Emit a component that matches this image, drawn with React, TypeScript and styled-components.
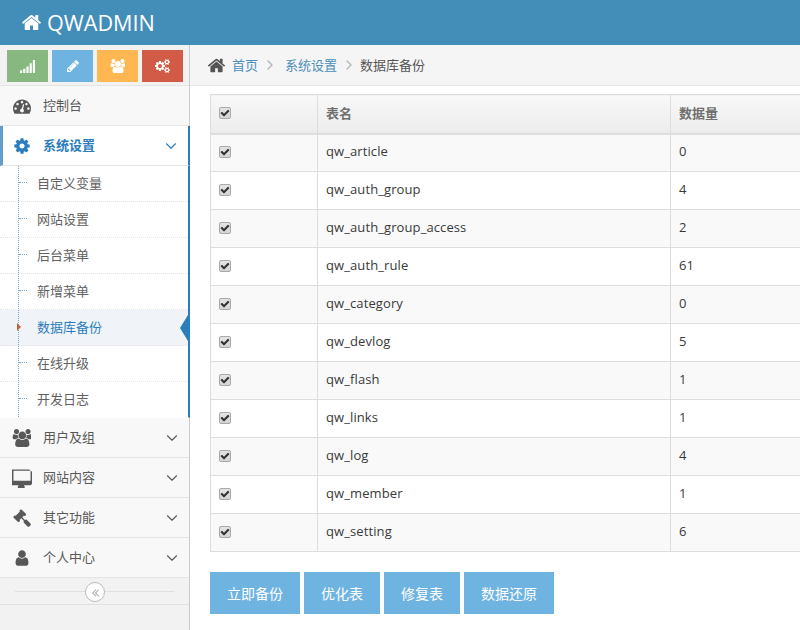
import React from "react";
import styled, { createGlobalStyle } from "styled-components";
import { FiChevronDown, FiChevronRight } from "react-icons/fi";

const FONT = `"Open Sans", "Noto Sans CJK SC", sans-serif`;

// Font Awesome 4 shapes, the react-icons set only has the newer ones
const HOME =
  "M1472 992v480q0 26-19 45t-45 19h-384v-384h-256v384h-384q-26 0-45-19t-19-45v-480q0-1 .5-3t.5-3l575-474 575 474q1 2 1 6zm223-69l-62 74q-8 9-21 11h-3q-13 0-21-7l-692-577-692 577q-12 8-24 7-13-2-21-11l-62-74q-8-10-7-23.5t11-21.5l719-599q32-26 76-26t76 26l244 204v-195q0-14 9-23t23-9h192q14 0 23 9t9 23v408l219 182q10 8 11 21.5t-7 23.5z";
const USERS =
  "M657 896q-162 5-265 128h-134q-82 0-138-40.5t-56-118.5q0-353 124-353 6 0 43.5 21t97.5 42.5 119 21.5q67 0 133-23-5 37-5 66 0 139 81 256zm1071 637q0 120-73 189.5t-194 69.5h-874q-121 0-194-69.5t-73-189.5q0-53 3.5-103.5t14-109 26.5-108.5 43-97.5 62-81 85.5-53.5 111.5-20q10 0 43 21.5t73 48 107 48 135 21.5 135-21.5 107-48 73-48 43-21.5q61 0 111.5 20t85.5 53.5 62 81 43 97.5 26.5 108.5 14 109 3.5 103.5zm-1024-1277q0 106-75 181t-181 75-181-75-75-181 75-181 181-75 181 75 75 181zm704 384q0 159-112.5 271.5t-271.5 112.5-271.5-112.5-112.5-271.5 112.5-271.5 271.5-112.5 271.5 112.5 112.5 271.5zm576 225q0 78-56 118.5t-138 40.5h-134q-103-123-265-128 81-117 81-256 0-29-5-66 66 23 133 23 59 0 119-21.5t97.5-42.5 43.5-21q124 0 124 353zm-128-609q0 106-75 181t-181 75-181-75-75-181 75-181 181-75 181 75 75 181z";
const USER =
  "M1536 1399q0 109-62.5 187t-150.5 78h-854q-88 0-150.5-78t-62.5-187q0-85 8.5-160.5t31.5-152 58.5-131 94-89 134.5-34.5q131 128 313 128t313-128q76 0 134.5 34.5t94 89 58.5 131 31.5 152 8.5 160.5zm-256-887q0 159-112.5 271.5t-271.5 112.5-271.5-112.5-112.5-271.5 112.5-271.5 271.5-112.5 271.5 112.5 112.5 271.5z";
const DASHBOARD =
  "M384 1152q0-53-37.5-90.5t-90.5-37.5-90.5 37.5-37.5 90.5 37.5 90.5 90.5 37.5 90.5-37.5 37.5-90.5zm192-448q0-53-37.5-90.5t-90.5-37.5-90.5 37.5-37.5 90.5 37.5 90.5 90.5 37.5 90.5-37.5 37.5-90.5zm428 481l101-382q6-26-7.5-48.5t-38.5-29.5-48 6.5-30 39.5l-101 382q-60 5-107 43.5t-63 98.5q-20 77 20 146t117 89 146-20 89-117q16-60-6-117t-72-91zm660-33q0-53-37.5-90.5t-90.5-37.5-90.5 37.5-37.5 90.5 37.5 90.5 90.5 37.5 90.5-37.5 37.5-90.5zm-640-640q0-53-37.5-90.5t-90.5-37.5-90.5 37.5-37.5 90.5 37.5 90.5 90.5 37.5 90.5-37.5 37.5-90.5zm448 192q0-53-37.5-90.5t-90.5-37.5-90.5 37.5-37.5 90.5 37.5 90.5 90.5 37.5 90.5-37.5 37.5-90.5zm320 448q0 261-141 483-19 29-54 29h-1402q-35 0-54-29-141-221-141-483 0-182 71-348t191-286 286-191 348-71 348 71 286 191 191 286 71 348z";
const COG =
  "M1152 896q0-106-75-181t-181-75-181 75-75 181 75 181 181 75 181-75 75-181zm512-109v222q0 12-8 23t-20 13l-185 28q-19 54-39 91 35 50 107 138 10 12 10 25t-9 23q-27 37-99 108t-94 71q-12 0-26-9l-138-108q-44 23-91 38-16 136-29 186-7 28-36 28h-222q-14 0-24.5-8.5t-11.5-21.5l-28-184q-49-16-90-37l-141 107q-10 9-25 9-14 0-25-11-126-114-165-168-7-10-7-23 0-12 8-23 15-21 51-66.5t54-70.5q-27-50-41-99l-183-27q-13-2-21-12.5t-8-23.5v-222q0-12 8-23t19-13l186-28q14-46 39-92-40-57-107-138-10-12-10-24 0-10 9-23 26-36 98.5-107.5t94.5-71.5q13 0 26 10l138 107q44-23 91-38 16-136 29-186 7-28 36-28h222q14 0 24.5 8.5t11.5 21.5l28 184q49 16 90 37l142-107q9-9 24-9 13 0 25 10 129 119 165 170 7 8 7 22 0 12-8 23-15 21-51 66.5t-54 70.5q26 50 41 98l183 28q13 2 21 12.5t8 23.5z";
const DESKTOP =
  "M1664 1120v-832q0-13-9.5-22.5t-22.5-9.5h-1472q-13 0-22.5 9.5t-9.5 22.5v832q0 13 9.5 22.5t22.5 9.5h1472q13 0 22.5-9.5t9.5-22.5zm128-832v1088q0 66-47 113t-113 47h-544q0 37 16 77.5t32 71 16 43.5q0 26-19 45t-45 19h-512q-26 0-45-19t-19-45q0-14 16-44t32-70 16-78h-544q-66 0-113-47t-47-113v-1088q0-66 47-113t113-47h1472q66 0 113 47t47 113z";
const GAVEL =
  "M1771 1536q0 53-37 90l-107 108q-39 37-91 37-53 0-90-37l-363-364q-38-36-38-90 0-53 43-96l-256-256-126 126q-14 14-34 14t-34-14q2 2 12.5 12t12.5 13 10 11.5 10 13.5 6 13.5 5.5 16.5 1.5 18q0 38-28 68-3 3-16.5 18t-19 20.5-18.5 16.5-22 15.5-22 9-26 4.5q-40 0-68-28l-408-408q-28-28-28-68 0-13 4.5-26t9-22 15.5-22 16.5-18.5 20.5-19 18-16.5q30-28 68-28 10 0 18 1.5t16.5 5.5 13.5 6 13.5 10 11.5 10 13 12.5 12 12.5q-14-14-14-34t14-34l348-348q14-14 34-14t34 14q-2-2-12.5-12t-12.5-13-10-11.5-10-13.5-6-13.5-5.5-16.5-1.5-18q0-38 28-68 3-3 16.5-18t19-20.5 18.5-16.5 22-15.5 22-9 26-4.5q40 0 68 28l408 408q28 28 28 68 0 13-4.5 26t-9 22-15.5 22-16.5 18.5-20.5 19-18 16.5q-30 28-68 28-10 0-18-1.5t-16.5-5.5-13.5-6-13.5-10-11.5-10-13-12.5-12-12.5q14 14 14 34t-14 34l-126 126 256 256q43-43 96-43 52 0 91 37l363 363q37 39 37 91z";
const COGS =
  "M896 896q0-106-75-181t-181-75-181 75-75 181 75 181 181 75 181-75 75-181zm768 512q0-52-38-90t-90-38-90 38-38 90q0 53 37.5 90.5t90.5 37.5 90.5-37.5 37.5-90.5zm0-1024q0-52-38-90t-90-38-90 38-38 90q0 53 37.5 90.5t90.5 37.5 90.5-37.5 37.5-90.5zm-384 421v185q0 10-7 19.5t-16 10.5l-155 24q-11 35-32 76 34 48 90 115 7 11 7 20 0 12-7 19-23 30-82.5 89.5t-78.5 59.5q-11 0-21-7l-115-90q-37 19-77 31-11 108-23 155-7 24-30 24h-186q-11 0-20-7.5t-10-17.5l-23-153q-34-10-75-31l-118 89q-7 7-20 7-11 0-21-8-144-133-144-160 0-9 7-19 10-14 41-53t47-61q-23-44-35-82l-152-24q-10-1-17-9.5t-7-19.5v-185q0-10 7-19.5t16-10.5l155-24q11-35 32-76-34-48-90-115-7-11-7-20 0-12 7-20 22-30 82-89t79-59q11 0 21 7l115 90q34-18 77-32 11-108 23-154 7-24 30-24h186q11 0 20 7.5t10 17.5l23 153q34 10 75 31l118-89q8-7 20-7 11 0 21 8 144 133 144 160 0 8-7 19-12 16-42 54t-45 60q23 48 34 82l152 23q10 2 17 10.5t7 19.5zm640 533v140q0 16-149 31-12 27-30 52 51 113 51 138 0 4-4 7-122 71-124 71-8 0-46-47t-52-68q-20 2-30 2t-30-2q-14 21-52 68t-46 47q-2 0-124-71-4-3-4-7 0-25 51-138-18-25-30-52-149-15-149-31v-140q0-16 149-31 13-29 30-52-51-113-51-138 0-4 4-7 4-2 35-20t59-34 30-16q8 0 46 46.5t52 67.5q20-2 30-2t30 2q51-71 92-112l6-2q4 0 124 70 4 3 4 7 0 25-51 138 17 23 30 52 149 15 149 31zm0-1024v140q0 16-149 31-12 27-30 52 51 113 51 138 0 4-4 7-122 71-124 71-8 0-46-47t-52-68q-20 2-30 2t-30-2q-14 21-52 68t-46 47q-2 0-124-71-4-3-4-7 0-25 51-138-18-25-30-52-149-15-149-31v-140q0-16 149-31 13-29 30-52-51-113-51-138 0-4 4-7 4-2 35-20t59-34 30-16q8 0 46 46.5t52 67.5q20-2 30-2t30 2q51-71 92-112l6-2q4 0 124 70 4 3 4 7 0 25-51 138 17 23 30 52 149 15 149 31z";
const PENCIL =
  "M491 1536l91-91-235-235-91 91v107h128v128h107zm523-928q0-22-22-22-10 0-17 7l-542 542q-7 7-7 17 0 22 22 22 10 0 17-7l542-542q7-7 7-17zm-54-192l416 416-832 832h-416v-416zm683 96q0 53-37 90l-166 166-416-416 166-165q36-38 90-38 53 0 91 38l235 234q37 39 37 91z";
const SIGNAL = "M0 1344h256v320h-256zM384 1152h256v512h-256zM768 896h256v768h-256zM1152 512h256v1152h-256zM1536 128h256v1536h-256z";
const DOUBLE_LEFT =
  "M1011 1376q0 13-10 23l-50 50q-10 10-23 10t-23-10l-466-466q-10-10-10-23t10-23l466-466q10-10 23-10t23 10l50 50q10 10 10 23t-10 23l-393 393 393 393q10 10 10 23zm384 0q0 13-10 23l-50 50q-10 10-23 10t-23-10l-466-466q-10-10-10-23t10-23l466-466q10-10 23-10t23 10l50 50q10 10 10 23t-10 23l-393 393 393 393q10 10 10 23z";
const CHECK =
  "M1671 566q0 40-28 68l-724 724-136 136q-28 28-68 28t-68-28l-136-136-362-362q-28-28-28-68t28-68l136-136q28-28 68-28t68 28l294 295 656-657q28-28 68-28t68 28l136 136q28 28 28 68z";

const GlobalStyle = createGlobalStyle`
  html, body {
    margin: 0;
    padding: 0;
    background: #fff;
  }
  body {
    font-family: ${FONT};
    font-size: 13px;
    color: #393939;
  }
`;

const Svg = styled.svg`
  display: block;
  flex: none;
  fill: currentColor;
`;

const Icon = ({ d, size, wide }: { d: string; size: number; wide?: boolean }) => (
  <Svg
    width={wide ? (size * 1920) / 1792 : size}
    height={size}
    viewBox={wide ? "0 0 1920 1792" : "0 0 1792 1792"}
  >
    <path d={d} />
  </Svg>
);

const Page = styled.div`
  width: 800px;
  height: 630px;
  display: flex;
  flex-direction: column;
  overflow: hidden;
`;

const Navbar = styled.header`
  height: 45px;
  flex: none;
  background: #438eb9;
  color: #fff;
  display: flex;
  align-items: center;
  gap: 5px;
  padding-left: 21px;
  font-size: 21.6px;
  line-height: 45px;
`;

const Body = styled.div`
  flex: 1;
  display: flex;
  min-height: 0;
`;

const Sidebar = styled.aside`
  width: 190px;
  flex: none;
  box-sizing: border-box;
  background: #f2f2f2;
  border-right: 1px solid #ccc;
`;

const Shortcuts = styled.div`
  height: 41px;
  display: flex;
  gap: 4px;
  padding: 5px 0 0 7px;
  box-sizing: border-box;
  border-bottom: 1px solid #e5e5e5;
`;

const Shortcut = styled.div<{ $color: string }>`
  width: 41px;
  height: 32px;
  background: ${(p) => p.$color};
  color: #fff;
  display: flex;
  align-items: center;
  justify-content: center;
`;

const MenuItem = styled.div<{ $open?: boolean }>`
  height: 40px;
  box-sizing: border-box;
  display: flex;
  align-items: center;
  background: ${(p) => (p.$open ? "#fff" : "#f8f8f8")};
  color: ${(p) => (p.$open ? "#2b7dbc" : "#585858")};
  font-weight: ${(p) => (p.$open ? 600 : 400)};
  border-bottom: 1px solid #e5e5e5;
  border-left: ${(p) => (p.$open ? "3px solid #629cc9" : "0")};
  border-right: ${(p) => (p.$open ? "2px solid #2b7dbc" : "0")};
  margin-right: ${(p) => (p.$open ? "-1px" : "0")};
  position: relative;
`;

const MenuIcon = styled.span<{ $open?: boolean }>`
  width: 43px;
  margin-left: ${(p) => (p.$open ? "-3px" : "0")};
  flex: none;
  display: flex;
  justify-content: center;
`;

const MenuLabel = styled.span`
  flex: 1;
  padding-bottom: 2px;
`;

const Caret = styled(FiChevronDown)`
  font-size: 18px;
  stroke-width: 1.5;
  margin-right: 8px;
  flex: none;
`;

const SubMenu = styled.ul`
  list-style: none;
  margin: 0 -1px 0 0;
  padding: 0;
  background: #fff;
  border-right: 2px solid #2b7dbc;
  border-bottom: 1px solid #e5e5e5;
  height: 252px;
  box-sizing: border-box;
  position: relative;

  &::before {
    content: "";
    position: absolute;
    z-index: 1;
    left: 18px;
    top: 0;
    bottom: 0;
    border-left: 1px dotted #6fa8d4;
  }
`;

const SubItem = styled.li<{ $active?: boolean }>`
  height: 36px;
  box-sizing: border-box;
  padding-left: 37px;
  line-height: 34px;
  color: ${(p) => (p.$active ? "#2b7dbc" : "#616161")};
  background: ${(p) => (p.$active ? "#f0f4f9" : "#fff")};
  border-bottom: 1px dotted #e4e4e4;
  position: relative;

  &:last-child {
    border-bottom: 0;
  }

  &::before {
    content: "";
    position: absolute;
    left: 19px;
    top: 16px;
    width: 8px;
    border-top: 1px dotted #6fa8d4;
    display: ${(p) => (p.$active ? "none" : "block")};
  }
`;

const ActiveMark = styled.span`
  position: absolute;
  z-index: 2;
  left: 17px;
  top: 13px;
  border-left: 4px solid #c86139;
  border-top: 4px solid transparent;
  border-bottom: 4px solid transparent;
`;

const ActiveTab = styled.span`
  position: absolute;
  right: 0;
  top: 5px;
  border-right: 8px solid #2b7dbc;
  border-top: 13px solid transparent;
  border-bottom: 13px solid transparent;
`;

const Collapse = styled.div`
  height: 27px;
  box-sizing: border-box;
  border-bottom: 1px solid #e0e0e0;
  padding: 0 15px;
  display: flex;
  align-items: center;
  position: relative;

  &::before {
    content: "";
    flex: 1;
    border-top: 1px solid #e0e0e0;
  }
`;

const CollapseButton = styled.span`
  position: absolute;
  left: 85px;
  top: 4px;
  width: 20px;
  height: 20px;
  box-sizing: border-box;
  border: 1px solid #bbb;
  border-radius: 50%;
  background: #fff;
  color: #aaa;
  display: flex;
  align-items: center;
  justify-content: center;
`;

const Main = styled.main`
  flex: 1;
  min-width: 0;
  overflow: hidden;
`;

const Breadcrumbs = styled.nav`
  height: 41px;
  box-sizing: border-box;
  background: #f5f5f5;
  border-bottom: 1px solid #e5e5e5;
  display: flex;
  align-items: center;
  padding-left: 17px;
  color: #555;
  line-height: 38px;
`;

const HomeIcon = styled.span`
  color: #555;
  margin-right: 6px;
`;

const Crumb = styled.a`
  color: #4c8fbd;
`;

const Sep = styled.span<{ $w: number }>`
  width: ${(p) => p.$w}px;
  box-sizing: border-box;
  padding-left: 4px;
  color: #b2b6bf;
  display: flex;
`;

const Content = styled.div`
  padding: 8px 0 0 20px;
`;

const Table = styled.table`
  width: 640px;
  table-layout: fixed;
  border-collapse: collapse;
  margin-bottom: 20px;
`;

const Th = styled.th<{ $w: number }>`
  width: ${(p) => p.$w}px;
  height: 39px;
  box-sizing: border-box;
  padding: 0 8px 3px;
  border: 1px solid #ddd;
  border-bottom-width: 2px;
  background: linear-gradient(#f8f8f8, #ececec);
  color: #707070;
  font-weight: 600;
  text-align: left;
`;

const Td = styled.td`
  height: 38px;
  box-sizing: border-box;
  padding: 0 8px 4px;
  border: 1px solid #ddd;
  color: #393939;
  letter-spacing: 0.1px;
`;

const Row = styled.tr`
  &:nth-child(odd) {
    background: #f9f9f9;
  }
`;

const CheckBox = styled.span`
  display: flex;
  width: 10px;
  height: 10px;
  margin-top: 2px;
  border: 1px solid #aaa;
  border-radius: 2px;
  background: linear-gradient(#e4e4e4, #d4d4d4);
  color: #333;
  align-items: center;
  justify-content: center;
`;

const Actions = styled.div`
  display: flex;
  gap: 4px;
`;

const Button = styled.button<{ $w: number }>`
  width: ${(p) => p.$w}px;
  height: 42px;
  border: 0;
  padding: 0;
  background: #6fb3e0;
  color: #fff;
  font-family: ${FONT};
  font-size: 14px;
`;

const closedMenus = [
  { label: "用户及组", icon: <Icon d={USERS} size={18} wide /> },
  { label: "网站内容", icon: <Icon d={DESKTOP} size={20} /> },
  { label: "其它功能", icon: <Icon d={GAVEL} size={18} /> },
  { label: "个人中心", icon: <Icon d={USER} size={18} /> },
];

const subItems = ["自定义变量", "网站设置", "后台菜单", "新增菜单", "数据库备份", "在线升级", "开发日志"];

const tables: [string, number][] = [
  ["qw_article", 0],
  ["qw_auth_group", 4],
  ["qw_auth_group_access", 2],
  ["qw_auth_rule", 61],
  ["qw_category", 0],
  ["qw_devlog", 5],
  ["qw_flash", 1],
  ["qw_links", 1],
  ["qw_log", 4],
  ["qw_member", 1],
  ["qw_setting", 6],
];

const Checked = () => (
  <CheckBox>
    <Icon d={CHECK} size={10} />
  </CheckBox>
);

export default function App() {
  return (
    <Page>
      <GlobalStyle />
      <Navbar>
        <Icon d={HOME} size={21} />
        QWADMIN
      </Navbar>
      <Body>
        <Sidebar>
          <Shortcuts>
            <Shortcut $color="#87b87f"><Icon d={SIGNAL} size={15} /></Shortcut>
            <Shortcut $color="#6fb3e0"><Icon d={PENCIL} size={14} /></Shortcut>
            <Shortcut $color="#ffb752"><Icon d={USERS} size={14} wide /></Shortcut>
            <Shortcut $color="#d15b47"><Icon d={COGS} size={14} wide /></Shortcut>
          </Shortcuts>
          <MenuItem>
            <MenuIcon><Icon d={DASHBOARD} size={18} /></MenuIcon>
            <MenuLabel>控制台</MenuLabel>
          </MenuItem>
          <MenuItem $open>
            <MenuIcon $open><Icon d={COG} size={18} /></MenuIcon>
            <MenuLabel>系统设置</MenuLabel>
            <Caret />
          </MenuItem>
          <SubMenu>
            {subItems.map((item) => {
              const active = item === "数据库备份";
              return (
                <SubItem key={item} $active={active}>
                  {active && <ActiveMark />}
                  {item}
                  {active && <ActiveTab />}
                </SubItem>
              );
            })}
          </SubMenu>
          {closedMenus.map((menu) => (
            <MenuItem key={menu.label}>
              <MenuIcon>{menu.icon}</MenuIcon>
              <MenuLabel>{menu.label}</MenuLabel>
              <Caret />
            </MenuItem>
          ))}
          <Collapse>
            <CollapseButton><Icon d={DOUBLE_LEFT} size={13} /></CollapseButton>
          </Collapse>
        </Sidebar>
        <Main>
          <Breadcrumbs>
            <HomeIcon><Icon d={HOME} size={19} /></HomeIcon>
            <Crumb>首页</Crumb>
            <Sep $w={27}><FiChevronRight size={16} /></Sep>
            <Crumb>系统设置</Crumb>
            <Sep $w={23}><FiChevronRight size={16} /></Sep>
            数据库备份
          </Breadcrumbs>
          <Content>
            <Table>
              <thead>
                <tr>
                  <Th $w={107}><Checked /></Th>
                  <Th $w={353}>表名</Th>
                  <Th $w={180}>数据量</Th>
                </tr>
              </thead>
              <tbody>
                {tables.map(([name, count]) => (
                  <Row key={name}>
                    <Td><Checked /></Td>
                    <Td>{name}</Td>
                    <Td>{count}</Td>
                  </Row>
                ))}
              </tbody>
            </Table>
            <Actions>
              <Button $w={90}>立即备份</Button>
              <Button $w={76}>优化表</Button>
              <Button $w={76}>修复表</Button>
              <Button $w={90}>数据还原</Button>
            </Actions>
          </Content>
        </Main>
      </Body>
    </Page>
  );
}
